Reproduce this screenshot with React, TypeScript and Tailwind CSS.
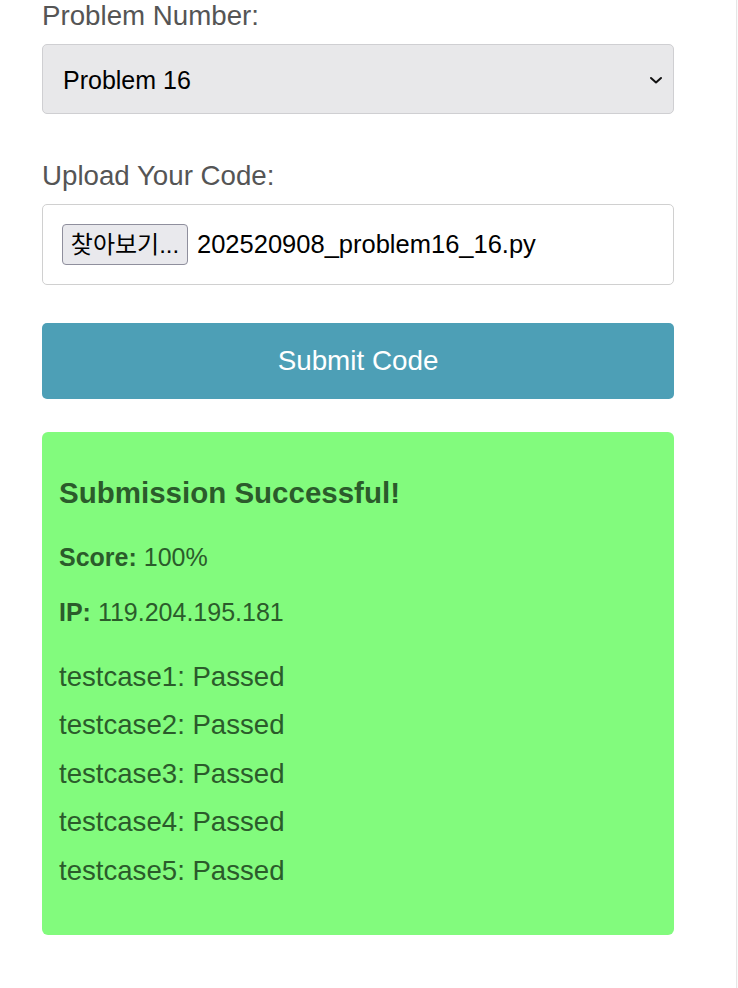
import React from "react";

export default function App() {
  const cases = [1, 2, 3, 4, 5];
  return (
    <div
      className="flex w-[738px] min-h-[988px] bg-white"
      style={{ fontFamily: '"Liberation Sans", Arial, "Noto Sans CJK KR", sans-serif' }}
    >
      <div className="flex-1 border-r border-[#e6e6e6] bg-white">
        <div className="ml-[42px] w-[632px] flex flex-col">
          <label className="text-[27.7px] leading-[31px] text-[#555555]">Problem Number:</label>
          <div className="mt-[13px] h-[70px] flex items-center justify-between rounded-[5px] border border-[#cfcfd2] bg-[#e8e8ea] pl-[20px] pr-[10px]">
            <span className="pt-[3px] text-[25px] text-black">Problem 16</span>
            <svg width="14" height="10" viewBox="0 0 14 10" className="mt-[2px]">
              <path d="M2 3 L7 7.5 L12 3" fill="none" stroke="#111" strokeWidth="2" strokeLinecap="round" strokeLinejoin="round" />
            </svg>
          </div>

          <label className="mt-[46px] text-[27.7px] leading-[31px] text-[#555555]">Upload Your Code:</label>
          <div className="mt-[13px] h-[81px] flex items-center rounded-[5px] border border-[#d0d0d0] bg-white pl-[19px]">
            <span
              className="h-[41px] w-[126px] flex items-center justify-center rounded-[4px] border border-[#8f8f9d] bg-[#e9e9ed] text-[24px] text-black"
              style={{ fontFamily: '"Liberation Sans", "Noto Sans CJK KR", sans-serif' }}
            >
              찾아보기...
            </span>
            <span className="ml-[9px] text-[25.5px] text-black">202520908_problem16_16.py</span>
          </div>

          <button className="mt-[38px] h-[76px] w-full rounded-[5px] bg-[#4d9fb6] text-[27.8px] text-white">
            Submit Code
          </button>

          <div className="mt-[33px] h-[503px] rounded-[6px] bg-[#82fb7d] pl-[17px] pt-[44px] text-[#2b5b2b]">
            <h3 className="text-[29.5px] leading-[34px] font-bold">Submission Successful!</h3>
            <p className="mt-[32.5px] text-[25px] leading-[28px]">
              <strong className="font-bold">Score:</strong> 100%
            </p>
            <p className="mt-[27px] text-[25px] leading-[28px]">
              <strong className="font-bold">IP:</strong> 119.204.195.181
            </p>
            <div className="mt-[27px]">
              {cases.map((n) => (
                <div key={n} className="text-[27.6px] leading-[48.5px]">
                  testcase{n}: Passed
                </div>
              ))}
            </div>
          </div>
        </div>
      </div>
      <div className="w-[1px] bg-[#fafafa]" />
    </div>
  );
}
